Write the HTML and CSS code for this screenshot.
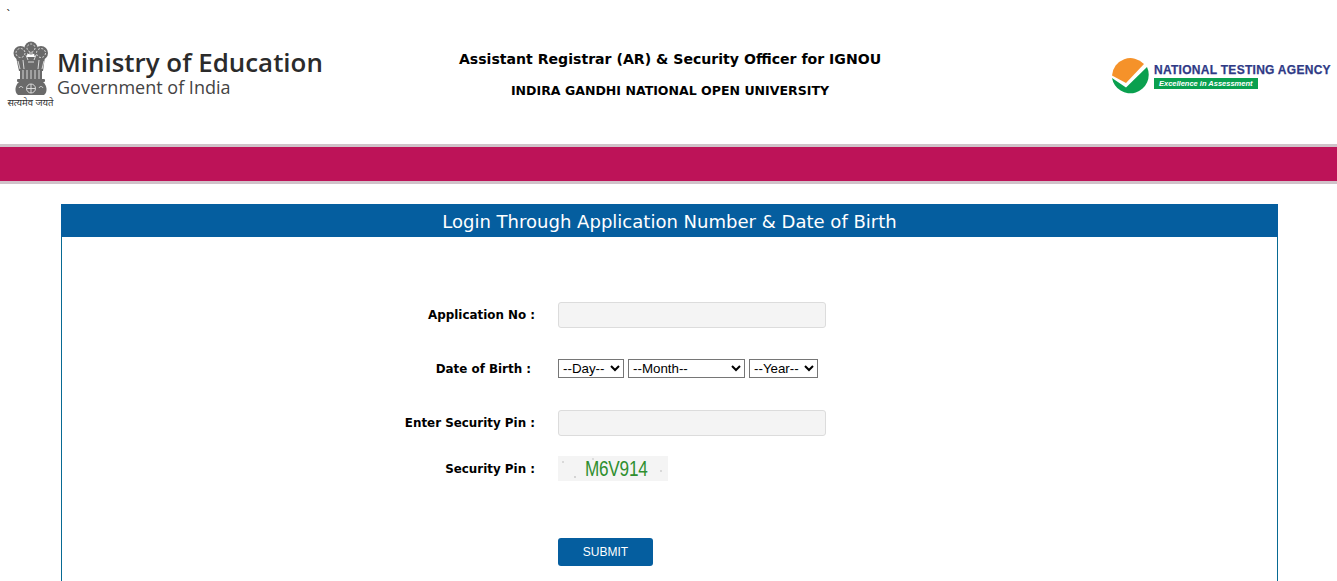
FILE: index.html
```html
<!DOCTYPE html>
<html lang="en">
<head>
    <meta charset="UTF-8">
    <meta name="viewport" content="width=device-width, initial-scale=1.0">
    <title>Login</title>
    <link rel="stylesheet" href="styles.css">
</head>
<body>
    <div class="tick">`</div>
    <div class="top">
        <div class="moe">
            <div class="emblem">
                <svg width="36" height="55" viewBox="0 0 36 55">
                    <g fill="#6a6a6a">
                        <circle cx="7.5" cy="12" r="7"/>
                        <circle cx="28" cy="12" r="7"/>
                        <circle cx="18" cy="7" r="6.5"/>
                        <path d="M3 16h29l-2 14H6z"/>
                        <rect x="7" y="29" width="22" height="10"/>
                        <rect x="4" y="38" width="28" height="3" rx="1"/>
                        <path d="M6 41h24c4 3 5 10 1 13H5c-4-3-3-10 1-13z"/>
                    </g>
                    <g fill="none" stroke="#e4e4e4" stroke-width="0.9">
                        <circle cx="7.5" cy="12" r="4.5" stroke-dasharray="2 1.5"/>
                        <circle cx="28" cy="12" r="4.5" stroke-dasharray="2 1.5"/>
                        <circle cx="18" cy="7" r="4" stroke-dasharray="2 1.5"/>
                        <path d="M13 14l2 5M23 14l-2 5M16 12h4M15 21h6M5 20l2 8M31 20l-2 8M10 19l1 9M26 19l-1 9"/>
                        <path d="M10 29v9M14 29v9M18 29v9M22 29v9M26 29v9"/>
                        <circle cx="18" cy="47.5" r="4.5"/>
                        <path d="M18 43v9M13.5 47.500h9M6 47c1-2 3-2 4 0M26 47c1-2 3-2 4 0"/>
                    </g>
                </svg>
                <span class="motto" lang="hi">सत्यमेव जयते</span>
            </div>
            <div class="moe-text">
                <div class="moe-name">Ministry of Education</div>
                <div class="moe-sub">Government of India</div>
            </div>
        </div>
        <div class="exam">
            <h3>Assistant Registrar (AR) &amp; Security Officer for IGNOU</h3>
            <h4>INDIRA GANDHI NATIONAL OPEN UNIVERSITY</h4>
        </div>
        <div class="nta">
            <svg width="37" height="38" viewBox="0 0 37 37">
                <path d="M0 18A18.500 18.500 0 0 1 32 6.500L14 25.500z" fill="#f5922a"/>
                <path d="M0 20.500L14 30 35 9.500A18.500 18.500 0 1 1 0 20.500z" fill="#0aa04f"/>
            </svg>
            <div class="nta-text">
                <div class="nta-name">NATIONAL TESTING AGENCY</div>
                <div class="nta-tag">Excellence in Assessment</div>
            </div>
        </div>
    </div>
    <div class="band"></div>
    <div class="panel">
        <div class="panel-head">Login Through Application Number &amp; Date of Birth</div>
        <form class="panel-body">
            <div class="row row-app">
                <label>Application No :</label>
                <input type="text" class="field">
            </div>
            <div class="row row-dob">
                <label class="label-dob">Date of Birth :</label>
                <div class="selects">
                    <select class="sel-day"><option>--Day--</option></select>
                    <select class="sel-month"><option>--Month--</option></select>
                    <select class="sel-year"><option>--Year--</option></select>
                </div>
            </div>
            <div class="row row-pin">
                <label>Enter Security Pin :</label>
                <input type="text" class="field">
            </div>
            <div class="row row-captcha">
                <label>Security Pin :</label>
                <div class="captcha"><span>M6V914</span></div>
            </div>
            <div class="row row-submit">
                <span></span>
                <button type="button" class="submit">SUBMIT</button>
            </div>
        </form>
    </div>
</body>
</html>
```

FILE: styles.css
```css
* {
    margin: 0;
    padding: 0;
    box-sizing: border-box;
}
html, body {
    height: 581px;
    overflow: hidden;
}
body {
    background: #fff;
    font-family: "DejaVu Sans", sans-serif;
    color: #000;
    position: relative;
}
.tick {
    position: absolute;
    left: 6px;
    top: 8px;
    font-size: 11px;
}
.top {
    height: 144px;
    display: flex;
    align-items: flex-start;
}
.moe {
    width: 340px;
    padding: 41px 0 0 7px;
    display: flex;
}
.emblem {
    width: 47px;
    display: flex;
    flex-direction: column;
    align-items: center;
}
.motto {
    font-family: "Noto Sans", "DejaVu Sans", sans-serif;
    font-size: 9.5px;
    line-height: 12px;
    margin-top: 1px;
    color: #333;
    white-space: nowrap;
}
.moe-text {
    padding: 5px 0 0 3px;
    font-family: "Open Sans", sans-serif;
    color: #2b2b2b;
}
.moe-name {
    font-size: 25.9px;
    line-height: 33px;
    font-weight: 600;
    white-space: nowrap;
}
.moe-sub {
    font-size: 18px;
    line-height: 17px;
    color: #444;
}
.exam {
    width: 440px;
    margin-left: 110px;
    padding-top: 50px;
    text-align: center;
}
.exam h3 {
    font-size: 14.1px;
    line-height: 18px;
}
.exam h4 {
    font-size: 12.55px;
    line-height: 16px;
    margin-top: 15px;
}
.nta {
    margin-left: auto;
    width: 225px;
    padding-top: 57px;
    display: flex;
    gap: 5px;
}
.nta-text {
    padding-top: 6px;
}
.nta-name {
    font-family: "Liberation Sans", sans-serif;
    font-size: 12px;
    font-weight: bold;
    line-height: 14px;
    color: #2f3a86;
    -webkit-text-stroke: 0.25px #2f3a86;
    white-space: nowrap;
    letter-spacing: 0.28px;
}
.nta-tag {
    width: 104px;
    height: 11px;
    margin-top: 1px;
    padding-left: 5px;
    background: #0aa04f;
    color: #fff;
    font-family: "Liberation Sans", sans-serif;
    font-size: 7.5px;
    font-weight: bold;
    font-style: italic;
    line-height: 11px;
    white-space: nowrap;
}
.band {
    height: 40px;
    background: #bd1358;
    border-top: 3px solid #d0c2c9;
    border-bottom: 3px solid #d0c2c9;
}
.panel {
    width: 1217px;
    margin: 20px 0 0 61px;
    border: 1px solid #086a93;
    border-top: none;
    height: 500px;
}
.panel-head {
    height: 33px;
    margin: 0 -1px;
    background: #055e9f;
    color: #fff;
    font-size: 18.05px;
    line-height: 35px;
    text-align: center;
}
.panel-body {
    padding-top: 65px;
}
.row {
    display: grid;
    grid-template-columns: 473px 1fr;
    column-gap: 23px;
    align-items: center;
}
.row label {
    font-size: 11.9px;
    font-weight: bold;
    text-align: right;
}
.row .label-dob {
    padding-right: 4px;
}
.row-app {
    height: 26px;
}
.row-dob {
    height: 19px;
    margin-top: 31px;
}
.row-pin {
    height: 26px;
    margin-top: 32px;
}
.row-captcha {
    height: 25px;
    margin-top: 20px;
}
.row-submit {
    height: 28px;
    margin-top: 57px;
}
.field {
    width: 268px;
    height: 26px;
    background: #f4f4f4;
    border: 1px solid #dcdcdc;
    border-radius: 3px;
}
.selects {
    display: flex;
    gap: 4px;
}
.selects select {
    height: 19px;
    font-family: "Liberation Sans", sans-serif;
    font-size: 13.33px;
    background: #fff;
}
.sel-day {
    width: 66px;
}
.sel-month {
    width: 117px;
}
.sel-year {
    width: 69px;
}
.captcha {
    width: 110px;
    height: 25px;
    background:
        radial-gradient(circle 1px at 5px 6px, #cfcfcf 60%, transparent),
        radial-gradient(circle 1px at 17px 21px, #c8c8c8 60%, transparent),
        radial-gradient(circle 1px at 35px 3px, #d4d4d4 60%, transparent),
        radial-gradient(circle 1px at 103px 15px, #cfcfcf 60%, transparent),
        #f4f4f4;
    color: #2f8f2f;
    font-family: "Liberation Sans", sans-serif;
    font-size: 22px;
    line-height: 25px;
    padding-left: 27px;
}
.captcha span {
    display: inline-block;
    transform: scaleX(0.78);
    transform-origin: left center;
    letter-spacing: -0.3px;
    white-space: nowrap;
}
.submit {
    width: 95px;
    height: 28px;
    background: #055e9f;
    color: #fff;
    border: none;
    border-radius: 3px;
    font-family: "Liberation Sans", sans-serif;
    font-size: 12px;
}
```
